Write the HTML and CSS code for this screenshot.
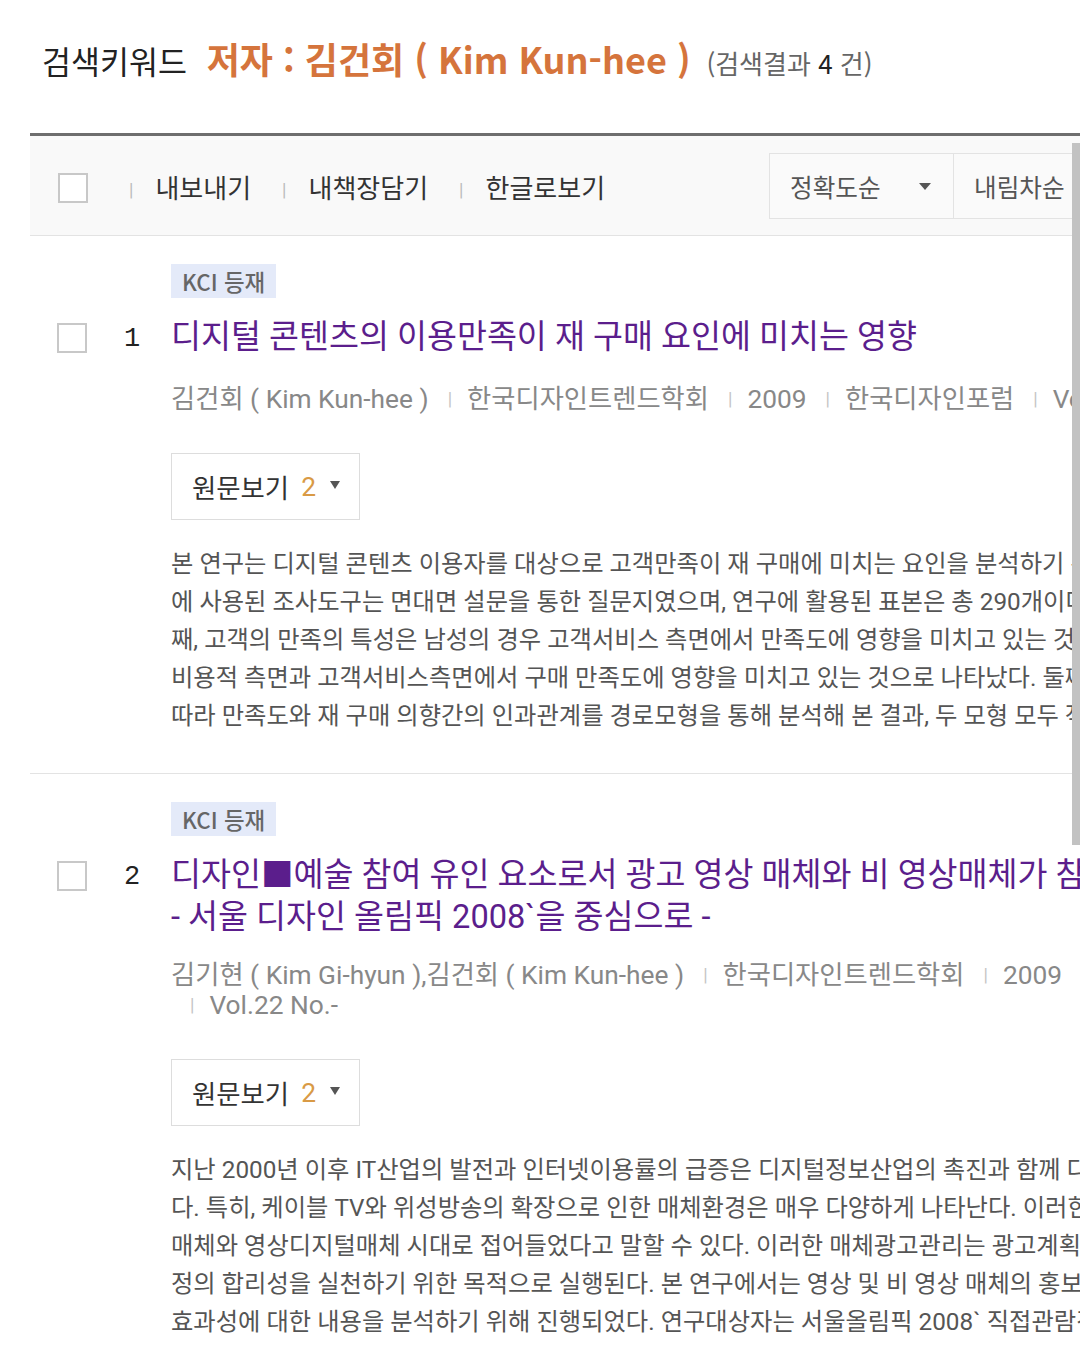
FILE: index.html
```html
<!DOCTYPE html>
<html lang="ko">
<head>
    <meta charset="UTF-8">
    <meta name="viewport" content="width=device-width, initial-scale=1.0">
    <title>검색결과 - 저자 : 김건회</title>
    <link rel="stylesheet" href="styles.css">
</head>
<body>
    <div class="page">
        <h2 class="keyword">검색키워드 <strong>저자 : 김건회 ( Kim Kun-hee )</strong> <span class="count">(검색결과 <b>4</b> 건)</span></h2>

        <div class="result">
            <div class="toolbar">
                <span class="check"></span>
                <ul class="actions">
                    <li>내보내기</li>
                    <li>내책장담기</li>
                    <li>한글로보기</li>
                </ul>
                <div class="sort">
                    <div class="sort-cell">정확도순 <i class="caret"></i></div>
                    <div class="sort-cell">내림차순</div>
                </div>
            </div>

            <div class="item">
                <span class="badge">KCI 등재</span>
                <div class="head">
                    <span class="check"></span>
                    <span class="num">1</span>
                    <h3 class="title">디지털 콘텐츠의 이용만족이 재 구매 요인에 미치는 영향</h3>
                </div>
                <ul class="meta">
                    <li>김건회 ( Kim Kun-hee )</li>
                    <li>한국디자인트렌드학회</li>
                    <li>2009</li>
                    <li>한국디자인포럼</li>
                    <li>Vol.22 No.-</li>
                </ul>
                <div class="view">원문보기 <span class="cnt">2</span> <i class="caret"></i></div>
                <p class="abstract">본 연구는 디지털 콘텐츠 이용자를 대상으로 고객만족이 재 구매에 미치는 요인을 분석하기 위한 것이다. 이를 위해 연구<br>에 사용된 조사도구는 면대면 설문을 통한 질문지였으며, 연구에 활용된 표본은 총 290개이다. 분석 결과를 살펴보면 첫<br>째, 고객의 만족의 특성은 남성의 경우 고객서비스 측면에서 만족도에 영향을 미치고 있는 것으로 나타났으며, 여성의 경우<br>비용적 측면과 고객서비스측면에서 구매 만족도에 영향을 미치고 있는 것으로 나타났다. 둘째, 성별에<br>따라 만족도와 재 구매 의향간의 인과관계를 경로모형을 통해 분석해 본 결과, 두 모형 모두 적합한 것으로 나타났다.</p>
            </div>

            <div class="item">
                <span class="badge">KCI 등재</span>
                <div class="head">
                    <span class="check"></span>
                    <span class="num">2</span>
                    <h3 class="title">디자인■예술 참여 유인 요소로서 광고 영상 매체와 비 영상매체가 참여 의도에 미치는 영향<br>- 서울 디자인 올림픽 2008`을 중심으로 -</h3>
                </div>
                <ul class="meta">
                    <li>김기현 ( Kim Gi-hyun ),김건회 ( Kim Kun-hee )</li>
                    <li>한국디자인트렌드학회</li>
                    <li>2009</li>
                    <li>Vol.22 No.-</li>
                </ul>
                <div class="view">원문보기 <span class="cnt">2</span> <i class="caret"></i></div>
                <p class="abstract">지난 2000년 이후 IT산업의 발전과 인터넷이용률의 급증은 디지털정보산업의 촉진과 함께 다양한 매체의 등장을 가져왔<br>다. 특히, 케이블 TV와 위성방송의 확장으로 인한 매체환경은 매우 다양하게 나타난다. 이러한 변화로 인해 기존의 인쇄<br>매체와 영상디지털매체 시대로 접어들었다고 말할 수 있다. 이러한 매체광고관리는 광고계획과 광고매체 선택 등 의사결<br>정의 합리성을 실천하기 위한 목적으로 실행된다. 본 연구에서는 영상 및 비 영상 매체의 홍보 효과와 참여 유인 요소로서의<br>효과성에 대한 내용을 분석하기 위해 진행되었다. 연구대상자는 서울올림픽 2008` 직접관람객을 대상으로 하였다.</p>
            </div>
        </div>
    </div>
    <div class="scrollbar"></div>
</body>
</html>
```

FILE: styles.css
```css
body {
    margin: 0;
    overflow: hidden;
    background: #fff;
    font-family: Roboto, "Noto Sans CJK KR", sans-serif;
    color: #333;
}
.page {
    width: 1200px;
}
.keyword {
    margin: 0;
    height: 133px;
    padding: 36px 0 0 42px;
    box-sizing: border-box;
    font-family: "Noto Sans CJK KR", sans-serif;
    font-weight: normal;
    font-size: 31.5px;
    line-height: 44px;
    color: #222;
}
.keyword strong {
    margin-left: 11px;
    font-size: 36px;
    font-weight: bold;
    color: #d5743c;
}
.keyword .count {
    margin-left: 7px;
    font-size: 26px;
    color: #666;
}
.keyword .count b {
    font-weight: normal;
    color: #222;
}
.result {
    margin-left: 30px;
    border-top: 3px solid #6e6e6e;
}
.check {
    flex: none;
    width: 30px;
    height: 30px;
    box-sizing: border-box;
    border: 2px solid #c8c8c8;
    background: #fff;
}
.toolbar {
    display: flex;
    align-items: center;
    height: 100px;
    box-sizing: border-box;
    padding: 4px 0 0 28px;
    background: #f9f9f9;
    border-bottom: 1px solid #e3e3e3;
}
.actions {
    display: flex;
    list-style: none;
    margin: 0 0 3px;
    padding: 0;
    font-size: 26px;
    color: #333;
}
.actions li {
    margin-left: 31px;
}
.actions li:first-child {
    margin-left: 41px;
}
.actions li::before {
    content: "|";
    margin-right: 22px;
    font-size: 18px;
    color: #bbb;
    vertical-align: 2px;
}
.sort {
    display: flex;
    margin: 0 63px 3px auto;
    height: 64px;
    border: 1px solid #e3e3e3;
    background: #fafafa;
}
.sort-cell {
    display: flex;
    align-items: center;
    width: 183px;
    box-sizing: border-box;
    padding-left: 20px;
    font-size: 24.6px;
    color: #555;
}
.sort-cell + .sort-cell {
    border-left: 1px solid #e3e3e3;
}
.caret {
    display: inline-block;
    width: 0;
    height: 0;
    border-left: 6px solid transparent;
    border-right: 6px solid transparent;
    border-top: 7px solid #555;
}
.sort-cell .caret {
    margin-left: 38px;
}
.item {
    padding: 28px 0 38px 141px;
    border-bottom: 1px solid #e3e3e3;
}
.badge {
    display: inline-block;
    height: 34px;
    line-height: 34px;
    padding: 0 11px;
    background: #e4eaf9;
    color: #666;
    font-family: "Noto Sans CJK KR", sans-serif;
    font-weight: 500;
    font-size: 22.4px;
}
.head {
    display: flex;
    align-items: flex-start;
    margin: 18px 0 0 -114px;
}
.head .check {
    margin-top: 7px;
}
.num {
    flex: none;
    width: 84px;
    padding-left: 37px;
    box-sizing: border-box;
    font-family: "Liberation Mono", monospace;
    font-size: 27px;
    line-height: 46px;
    color: #222;
}
.title {
    margin: 0;
    font-weight: normal;
    font-size: 32.6px;
    line-height: 42px;
    color: #5b1e8c;
    white-space: nowrap;
}
.meta {
    display: flex;
    flex-wrap: wrap;
    list-style: none;
    margin: 22px 0 0;
    padding: 0;
    font-size: 26.3px;
    line-height: 30px;
    color: #888;
}
.meta li + li::before {
    content: "|";
    margin: 0 15px 0 19px;
    font-size: 18px;
    color: #c4c4c4;
    vertical-align: 3px;
}
.view {
    display: flex;
    align-items: center;
    width: max-content;
    height: 67px;
    box-sizing: border-box;
    margin-top: 39px;
    padding: 0 19px 0 20px;
    border: 1px solid #ddd;
    background: #fff;
    font-size: 26.4px;
    color: #333;
}
.view .cnt {
    margin-left: 12px;
    color: #d99a45;
}
.view .cnt + .caret {
    margin-left: 14px;
    margin-top: -4px;
    border-left-width: 5px;
    border-right-width: 5px;
    border-top-width: 8px;
}
.abstract {
    margin: 25px 0 0;
    font-size: 24.3px;
    line-height: 38px;
    color: #555;
    white-space: nowrap;
    overflow: hidden;
}
.scrollbar {
    position: absolute;
    left: 1072px;
    top: 143px;
    width: 8px;
    height: 702px;
    background: #c2c2c2;
}
```
